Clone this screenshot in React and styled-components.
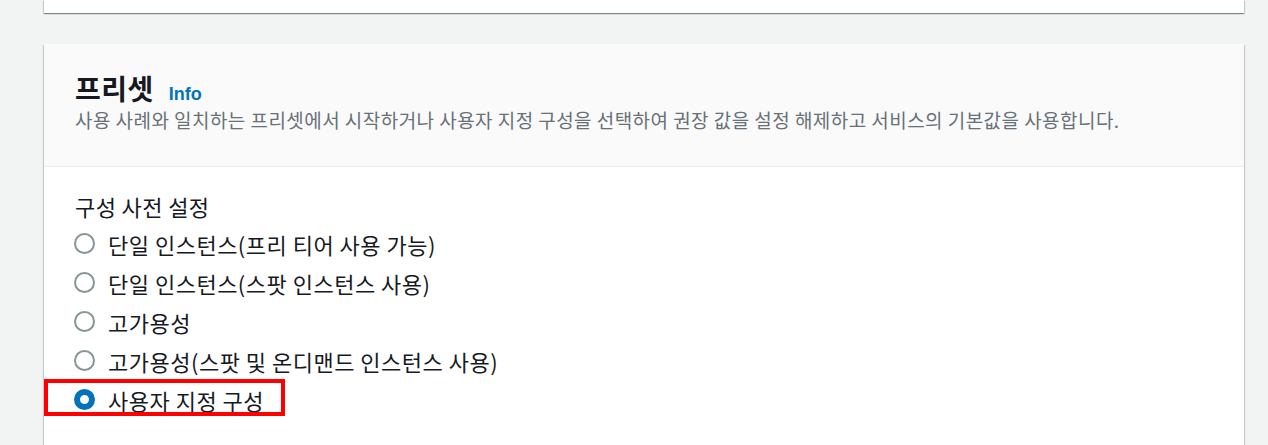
import React, { useState } from "react";
import styled, { createGlobalStyle } from "styled-components";

const GlobalStyle = createGlobalStyle`
  html, body {
    margin: 0;
    padding: 0;
    background: #f2f3f3;
    font-family: "Noto Sans CJK KR", "Liberation Sans", sans-serif;
    color: #16191f;
    overflow: hidden;
  }
`;

const Page = styled.div`
  padding: 0 24px 0 44px;
  display: flex;
  flex-direction: column;
  gap: 31px;
`;

const Card = styled.section`
  width: 1200px;
  background: #fff;
  box-shadow: 0 1px 1px 0 rgba(0, 28, 36, 0.3), 1px 1px 1px 0 rgba(0, 28, 36, 0.15),
    -1px 1px 1px 0 rgba(0, 28, 36, 0.15);
`;

const TopCard = styled(Card)`
  height: 13px;
`;

const Header = styled.header`
  background: #fafafa;
  border-bottom: 1px solid #eaeded;
  padding: 25px 31px 33px;
`;

const TitleRow = styled.div`
  display: flex;
  align-items: baseline;
  gap: 15px;
`;

const Title = styled.h2`
  margin: 0;
  font-size: 28px;
  line-height: 38px;
  font-weight: 700;
  letter-spacing: 0.5px;
  color: #16191f;
`;

const InfoLink = styled.a`
  font-family: "Liberation Sans", Arial, sans-serif;
  font-size: 18px;
  font-weight: 700;
  color: #0073bb;
  text-decoration: none;
`;

const Description = styled.p`
  margin: 0;
  font-size: 19px;
  line-height: 26px;
  letter-spacing: 0.45px;
  color: #687078;
`;

const Body = styled.div`
  padding: 24px 31px 30px;
`;

const Legend = styled.div`
  font-size: 22px;
  line-height: 30px;
  letter-spacing: 0.4px;
  color: #16191f;
  margin-bottom: 3px;
`;

const RadioList = styled.div`
  display: flex;
  flex-direction: column;
`;

const Option = styled.label`
  position: relative;
  display: flex;
  align-items: center;
  gap: 13px;
  height: 39px;
  font-size: 22px;
  letter-spacing: 0.5px;
  color: #16191f;
  cursor: pointer;
`;

const Highlight = styled.span`
  position: absolute;
  left: -31px;
  top: -1px;
  width: 241px;
  height: 37px;
  border: 4px solid #ff0000;
  box-sizing: border-box;
  pointer-events: none;
`;

const Circle = styled.span`
  width: 21px;
  height: 21px;
  margin-left: -1px;
  box-sizing: border-box;
  border-radius: 50%;
  flex: none;
  border: ${(p) => (p.$checked ? "6px solid #0073bb" : "2px solid #879596")};
  background: #fff;
`;

const options = [
  "단일 인스턴스(프리 티어 사용 가능)",
  "단일 인스턴스(스팟 인스턴스 사용)",
  "고가용성",
  "고가용성(스팟 및 온디맨드 인스턴스 사용)",
  "사용자 지정 구성",
];

export default function App() {
  const [selected, setSelected] = useState(4);
  return (
    <>
      <GlobalStyle />
      <Page>
        <TopCard />
        <Card>
          <Header>
            <TitleRow>
              <Title>프리셋</Title>
              <InfoLink href="#">Info</InfoLink>
            </TitleRow>
            <Description>
              사용 사례와 일치하는 프리셋에서 시작하거나 사용자 지정 구성을 선택하여 권장 값을 설정 해제하고 서비스의 기본값을 사용합니다.
            </Description>
          </Header>
          <Body>
            <Legend>구성 사전 설정</Legend>
            <RadioList>
              {options.map((o, i) => (
                <Option key={o} onClick={() => setSelected(i)}>
                  {i === 4 && <Highlight />}
                  <Circle $checked={selected === i} />
                  {o}
                </Option>
              ))}
            </RadioList>
          </Body>
        </Card>
      </Page>
    </>
  );
}
